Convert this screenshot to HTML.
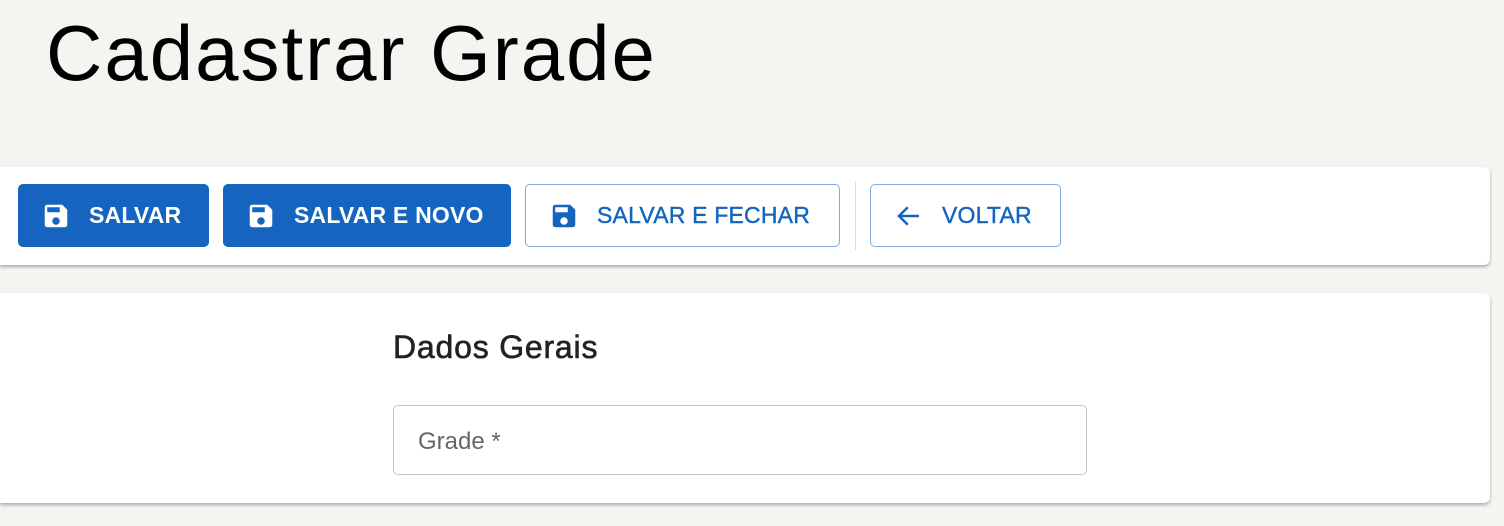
<!DOCTYPE html>
<html><head><meta charset="utf-8"><style>
body{margin:0;width:1504px;height:526px;background:#f5f4f0;font-family:"Liberation Sans",Arial,sans-serif;position:relative;overflow:hidden}
h1{position:absolute;left:46px;top:8px;margin:0;font-weight:400;font-size:78px;color:#000;letter-spacing:2px}
.card{position:absolute;left:0;width:1490px;background:#fff;border-radius:0 6px 6px 0;box-shadow:0 2px 3px rgba(0,0,0,.3)}
.btn{position:absolute;top:184px;height:63px;box-sizing:border-box;border-radius:5px;display:flex;align-items:center;font-size:23px;font-weight:700;letter-spacing:0.2px}
.f{background:#1565c0;color:#fff}
.o{border:1px solid #7eaadf;color:#1565c0;background:#fff}
.btn svg{margin-left:23px;margin-right:18px}
</style></head><body>
<h1>Cadastrar Grade</h1>
<div class="card" style="top:167px;height:98px"></div>
<div class="btn f" style="left:18px;width:191px"><svg width="30" height="30" viewBox="0 0 24 24"><path fill="#fff" d="M17 3H5a2 2 0 0 0-2 2v14a2 2 0 0 0 2 2h14a2 2 0 0 0 2-2V7l-4-4zm-5 16a3 3 0 1 1 0-6 3 3 0 0 1 0 6zm3-10H5V5h10v4z"/></svg>SALVAR</div>
<div class="btn f" style="left:223px;width:288px"><svg width="30" height="30" viewBox="0 0 24 24"><path fill="#fff" d="M17 3H5a2 2 0 0 0-2 2v14a2 2 0 0 0 2 2h14a2 2 0 0 0 2-2V7l-4-4zm-5 16a3 3 0 1 1 0-6 3 3 0 0 1 0 6zm3-10H5V5h10v4z"/></svg>SALVAR E NOVO</div>
<div class="btn o" style="left:525px;width:315px"><svg width="30" height="30" viewBox="0 0 24 24"><path fill="#1565c0" d="M17 3H5a2 2 0 0 0-2 2v14a2 2 0 0 0 2 2h14a2 2 0 0 0 2-2V7l-4-4zm-5 16a3 3 0 1 1 0-6 3 3 0 0 1 0 6zm3-10H5V5h10v4z"/></svg><span style="font-weight:400;-webkit-text-stroke:0.4px #1565c0">SALVAR E FECHAR</span></div>
<div style="position:absolute;left:855px;top:181px;width:1px;height:69px;background:#ddd"></div>
<div class="btn o" style="left:870px;width:191px"><svg width="30" height="30" viewBox="0 0 24 24"><path fill="none" stroke="#1565c0" stroke-width="2" d="M20 12H5M11 5l-7 7 7 7"/></svg><span style="font-weight:400;-webkit-text-stroke:0.4px #1565c0">VOLTAR</span></div>
<div class="card" style="top:293px;height:210px"></div>
<div style="position:absolute;left:393px;top:329px;font-size:32px;letter-spacing:0.8px;color:#222;font-weight:400;-webkit-text-stroke:0.6px #222">Dados Gerais</div>
<div style="position:absolute;left:393px;top:405px;width:694px;height:70px;box-sizing:border-box;border:1px solid #c4c4c4;border-radius:5px;font-size:24px;color:#666;padding:22px 0 0 24px">Grade *</div>
</body></html>
